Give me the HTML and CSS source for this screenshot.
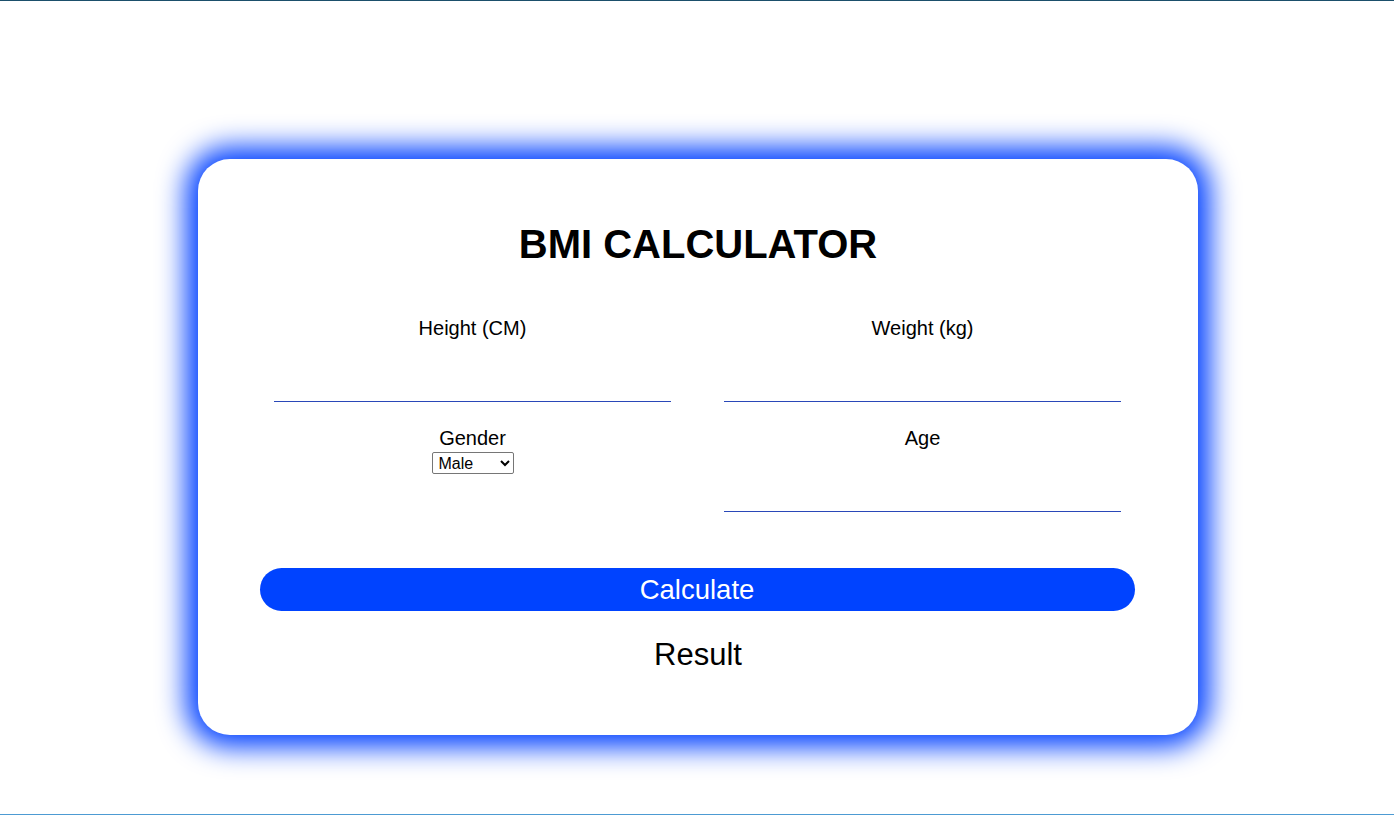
FILE: index.html
```html
<!DOCTYPE html>
<html lang="en">
<head>
<meta charset="utf-8">
<title>BMI Calculator</title>
<link rel="stylesheet" href="styles.css">
</head>
<body>
<main class="page">
  <section class="card">
    <h1 class="title">BMI CALCULATOR</h1>
    <div class="fields">
      <div class="field">
        <label class="label" for="height">Height (CM)</label>
        <input class="line-input" id="height" type="text">
      </div>
      <div class="field">
        <label class="label" for="weight">Weight (kg)</label>
        <input class="line-input" id="weight" type="text">
      </div>
      <div class="field">
        <label class="label" for="gender">Gender</label>
        <select class="select" id="gender">
          <option>Male</option>
          <option>Female</option>
        </select>
      </div>
      <div class="field">
        <label class="label" for="age">Age</label>
        <input class="line-input" id="age" type="text">
      </div>
    </div>
    <button class="calc-btn" type="button">Calculate</button>
    <p class="result">Result</p>
  </section>
</main>
</body>
</html>
```

FILE: styles.css
```css
* {
  box-sizing: border-box;
}

html, body {
  margin: 0;
  padding: 0;
}

body {
  height: 815px;
  background: #ffffff;
  border-top: 1px solid #1b4f6b;
  border-bottom: 1px solid #4d9bd3;
  font-family: "Liberation Sans", Arial, sans-serif;
  color: #000;
  overflow: hidden;
}

.page {
  display: flex;
  justify-content: center;
  padding-top: 158px;
  padding-left: 2px;
}

.card {
  width: 1000px;
  height: 576px;
  background: #fff;
  border-radius: 32px;
  box-shadow: 0 0 28px 12px #0040ff;
  display: flex;
  flex-direction: column;
  align-items: center;
  padding: 62px 50px 0;
}

.title {
  margin: 0;
  font-size: 40px;
  line-height: 46px;
  font-weight: bold;
}

.fields {
  margin-top: 50px;
  width: 900px;
  display: grid;
  grid-template-columns: 449px 451px;
  grid-template-rows: 85px 85px;
  row-gap: 25px;
}

.field {
  display: flex;
  flex-direction: column;
  align-items: center;
}

.label {
  font-size: 20px;
  line-height: 23px;
  display: block;
}

.line-input {
  width: 397px;
  height: 62px;
  border: none;
  border-bottom: 1px solid #2a48b8;
  outline: none;
  background: transparent;
  font-size: 20px;
  font-family: inherit;
  text-align: center;
}

.select {
  margin-top: 2px;
  font-family: "Liberation Sans", Arial, sans-serif;
  font-size: 16px;
  height: 22px;
  width: 82px;
  padding: 0 2px;
  border: 1px solid #767676;
  border-radius: 2px;
  background: #fff;
  color: #000;
}

.calc-btn {
  margin-top: 56px;
  margin-left: -2px;
  width: 875px;
  height: 43px;
  border: none;
  border-radius: 22px;
  background: #0043ff;
  color: #fff;
  font-family: inherit;
  font-size: 27.5px;
  line-height: 42px;
  padding: 1px 0 0;
  cursor: pointer;
}

.result {
  margin: 27px 0 0;
  font-size: 31px;
  line-height: 34px;
}
```
